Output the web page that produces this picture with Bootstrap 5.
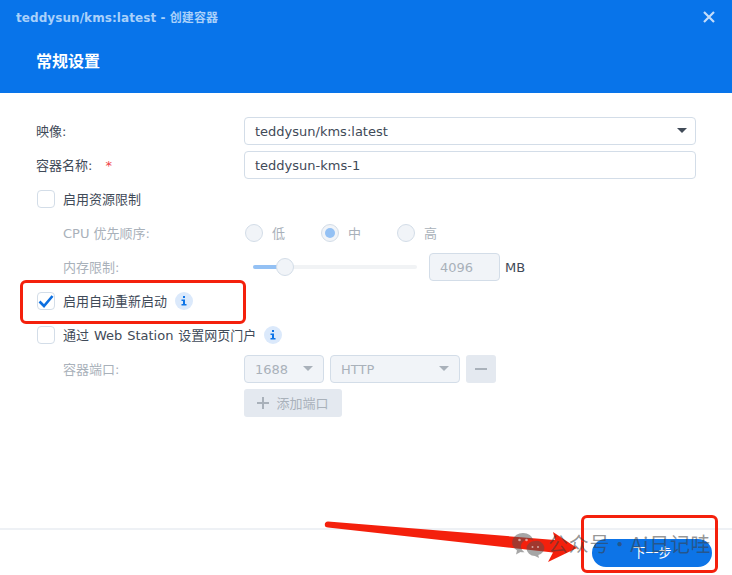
<!DOCTYPE html>
<html lang="zh">
<head>
<meta charset="utf-8">
<title>创建容器</title>
<link rel="stylesheet" href="https://cdn.jsdelivr.net/npm/bootstrap@5.3.0/dist/css/bootstrap.min.css">
<style>
html,body{height:575px;overflow:hidden;background:#fff}
body{position:relative;font-family:"DejaVu Sans","Noto Sans CJK SC",sans-serif;font-size:13px;color:#3f4a58;line-height:18px}
.dlg-head{background:#0874ea;height:93px;padding:9px 16px 0 16px}
.dlg-title{color:#a9d0fa;font-size:12px;font-weight:700;height:18px;letter-spacing:.07px}
.dlg-x{width:12px;height:12px;margin:2px 1px 0 0}
.dlg-h{color:#fff;font-size:16px;font-weight:700;margin:25px 0 0 20px;line-height:20px}
.dlg-body{padding:24px 36px 0 36px}
.frow{height:28px;margin-bottom:6px}
.flabel{width:208px;flex:none;padding-top:2px}
.tx{padding-top:2px}
.muted{color:#a9b1ba}
.req{color:#f0444a;margin-left:9px}
.fbox{height:28px;border:1px solid #d3dde8;border-radius:4px;padding:0 10px;line-height:28px;background:#fff;color:#3f4a58;position:relative}
.fbox.off{background:#f1f4f8;color:#a9b1ba}
.caret-d{width:0;height:0;border-left:5px solid transparent;border-right:5px solid transparent;border-top:5px solid #414b58;position:absolute;right:8px;top:10px}
.off .caret-d{border-top-color:#a9b1ba;right:10px}
.cbx{width:18px;height:18px;border:1px solid #d3dde8;border-radius:4px;background:#fff;margin:0 8px 0 1px;flex:none;display:flex;align-items:center;justify-content:center}
.rad{width:18px;height:18px;border:1px solid #d3dde8;border-radius:50%;background:#f1f4f8;flex:none;margin-right:9px;display:flex;align-items:center;justify-content:center}
.rad i{width:10px;height:10px;border-radius:50%;background:#94c1f4;display:block}
.radio-cell{width:76px;display:flex;align-items:center;padding-left:1px}
.indent{width:208px;flex:none;padding:2px 0 0 27px}
.infod{width:18px;height:18px;border-radius:50%;background:#dbe9fb;margin-left:8px;flex:none;display:flex;align-items:center;justify-content:center}
.websp{word-spacing:.8px}
.track{width:164px;height:4px;background:#f1f3f5;border-radius:2px;position:relative;margin-left:9px}
.track b{display:block;width:30px;height:4px;background:#94c1f4;border-radius:2px}
.thumb{position:absolute;left:23px;top:-7px;width:18px;height:18px;border-radius:50%;background:#f1f4f8;border:1px solid #d3dde8}
.memin{width:71px;margin-left:12px}
.mb-unit{margin-left:5px;padding-top:2px}
.port-a{width:80px}
.port-b{width:130px;margin-left:6px}
.sq{background:#e4e9f0;border-radius:3px;height:28px;display:flex;align-items:center;justify-content:center;color:#a9b1ba}
.sq-rm{width:30px;margin-left:6px}
.sq-add{width:98px}
.sq-add svg{margin-right:7px}
.foot{position:absolute;left:0;right:0;top:528px;bottom:0;border-top:2px solid #eef1f5;padding:9px 20px 0 0}
.nextb{width:120px;height:28px;border-radius:14px;background:#0d74e7;color:#fff;border:0;font-size:13px;line-height:28px;padding:0}
.redbox{position:absolute;border:3px solid #f4200c;border-radius:6px}
.rb1{left:20px;top:280px;width:226px;height:44px}
.rb2{left:581px;top:515px;width:137px;height:58px}
.ann{position:absolute;left:0;top:0;pointer-events:none}
.wm{position:absolute;left:548px;top:532px;font-family:"Noto Sans CJK SC",sans-serif;font-size:20px;line-height:24px;font-weight:400;letter-spacing:.7px;word-spacing:-5.500px;color:rgba(60,60,60,.55);white-space:nowrap}
</style>
</head>
<body>
<div class="dlg-head">
  <div class="d-flex justify-content-between align-items-start">
    <div class="dlg-title">teddysun/kms:latest - 创建容器</div>
    <svg class="dlg-x" viewBox="0 0 12 12"><path d="M1 1l10 10M11 1L1 11" stroke="#c3dcfa" stroke-width="2.200" fill="none"/></svg>
  </div>
  <div class="dlg-h">常规设置</div>
</div>
<div class="dlg-body">
  <div class="frow d-flex align-items-center">
    <div class="flabel">映像:</div>
    <div class="fbox flex-grow-1">teddysun/kms:latest<span class="caret-d"></span></div>
  </div>
  <div class="frow d-flex align-items-center">
    <div class="flabel">容器名称: <span class="req">*</span></div>
    <div class="fbox flex-grow-1">teddysun-kms-1</div>
  </div>
  <div class="frow d-flex align-items-center">
    <span class="cbx"></span><span class="tx">启用资源限制</span>
  </div>
  <div class="frow d-flex align-items-center">
    <div class="indent muted">CPU 优先顺序:</div>
    <div class="radio-cell"><span class="rad"></span><span class="muted tx">低</span></div>
    <div class="radio-cell"><span class="rad"><i></i></span><span class="muted tx">中</span></div>
    <div class="radio-cell"><span class="rad"></span><span class="muted tx">高</span></div>
  </div>
  <div class="frow d-flex align-items-center">
    <div class="indent muted">内存限制:</div>
    <div class="track"><b></b><span class="thumb"></span></div>
    <div class="fbox off memin">4096</div>
    <span class="mb-unit">MB</span>
  </div>
  <div class="frow d-flex align-items-center">
    <span class="cbx"><svg width="16" height="14" viewBox="0 0 16 14"><path d="M1.500 7.500l4.500 4.500L14.500 2" stroke="#0d6fe0" stroke-width="2.600" fill="none"/></svg></span>
    <span class="tx">启用自动重新启动</span>
    <span class="infod"><svg width="6" height="10" viewBox="0 0 6 10"><path d="M2 0h2v2H2zM.5 3.500H4V8h1.500v1.500h-5V8H2V5H.5z" fill="#0d74e7"/></svg></span>
  </div>
  <div class="frow d-flex align-items-center">
    <span class="cbx"></span><span class="tx websp">通过 Web Station 设置网页门户</span>
    <span class="infod"><svg width="6" height="10" viewBox="0 0 6 10"><path d="M2 0h2v2H2zM.5 3.500H4V8h1.500v1.500h-5V8H2V5H.5z" fill="#0d74e7"/></svg></span>
  </div>
  <div class="frow d-flex align-items-center">
    <div class="indent muted">容器端口:</div>
    <div class="fbox off port-a">1688<span class="caret-d"></span></div>
    <div class="fbox off port-b">HTTP<span class="caret-d"></span></div>
    <div class="sq sq-rm"><svg width="12" height="2" viewBox="0 0 12 2"><rect width="12" height="2" fill="#a9b1ba"/></svg></div>
  </div>
  <div class="frow d-flex align-items-center">
    <div class="indent"></div>
    <div class="sq sq-add"><svg width="12" height="12" viewBox="0 0 12 12"><path d="M6 0v12M0 6h12" stroke="#a9b1ba" stroke-width="2"/></svg><span class="tx">添加端口</span></div>
  </div>
</div>
<div class="foot d-flex justify-content-end">
  <button class="nextb" type="button">下一步</button>
</div>

<div class="redbox rb1"></div>
<div class="redbox rb2"></div>
<svg class="ann" width="732" height="575" viewBox="0 0 732 575">
  <path d="M328 521.500Q324 522 325 526Q325 527 328 527.500L553 552.500 548 562 577 548 553 532 555 540Z" fill="#f4200c"/>
  <g fill="#505050" opacity=".5"><path d="M523 533a10.500 9.500 0 0 0-6 17.500l-1 4 4.500-2.500a11 11 0 0 0 3 .3 10 10 0 0 0 1-.1 8 7 0 0 1 9-11.700 10.500 9.500 0 0 0-10.500-7.500z"/><path d="M535 541a8.500 7.500 0 0 0 0 15l4 2-.7-3a7.500 7 0 0 0-3.300-14z"/></g>
  <g fill="#fff" opacity=".55"><circle cx="519.500" cy="540" r="1.300"/><circle cx="526.500" cy="540" r="1.300"/><circle cx="532.500" cy="547" r="1"/><circle cx="538" cy="547" r="1"/></g>
</svg>
<div class="wm">公众号 · Ai日记哇</div>
</body>
</html>
